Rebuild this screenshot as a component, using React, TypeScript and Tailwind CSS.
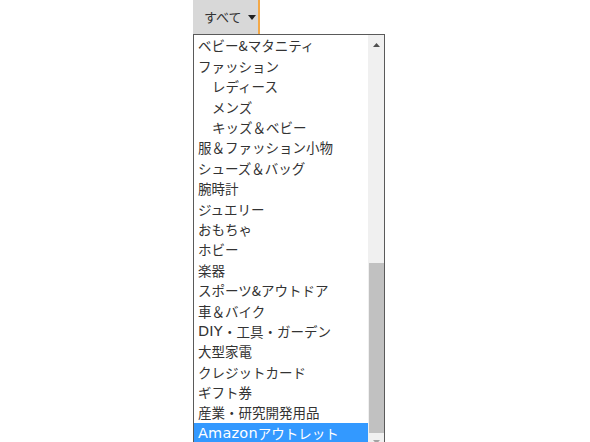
import React from "react";

const items: { label: string; latin?: string; indent?: boolean }[] = [
  { label: "ベビー&マタニティ" },
  { label: "ファッション" },
  { label: "レディース", indent: true },
  { label: "メンズ", indent: true },
  { label: "キッズ＆ベビー", indent: true },
  { label: "服＆ファッション小物" },
  { label: "シューズ＆バッグ" },
  { label: "腕時計" },
  { label: "ジュエリー" },
  { label: "おもちゃ" },
  { label: "ホビー" },
  { label: "楽器" },
  { label: "スポーツ&アウトドア" },
  { label: "車＆バイク" },
  { latin: "DIY", label: "・工具・ガーデン" },
  { label: "大型家電" },
  { label: "クレジットカード" },
  { label: "ギフト券" },
  { label: "産業・研究開発用品" },
  { latin: "Amazon", label: "アウトレット" },
];

export default function App() {
  return (
    <div
      className="w-[590px] h-[442px] bg-white overflow-hidden relative"
      style={{ fontFamily: '"Noto Sans CJK JP", "Noto Sans", sans-serif' }}
    >
      <div className="ml-[193px] flex flex-col">
        <div className="flex">
          <div className="w-[65px] h-[34px] bg-[#d8d8d8] flex items-center pl-[11px] text-[13px] text-[#333]">
            すべて
            <svg width="8" height="5" viewBox="0 0 8 5" className="ml-[6px] mt-[1px]">
              <path d="M0 0 L8 0 L4 5 Z" fill="#222" />
            </svg>
          </div>
          <div className="w-[2px] h-[34px] bg-[#f3a847]" />
        </div>
        <div className="w-[192px] h-[420px] border-t border-l border-r border-[#5a5a5a] flex bg-white">
          <div className="flex-1 flex flex-col pt-[1px]">
            {items.map((it, i) => {
              const sel = i === items.length - 1;
              return (
                <div
                  key={i}
                  className={`h-[20.4px] shrink-0 flex items-center text-[13.5px] leading-none whitespace-nowrap ${
                    it.indent ? "pl-[18px]" : "pl-[4px]"
                  } ${sel ? "bg-[#3399ff] text-white" : "text-[#333]"}`}
                >
                  {it.latin && (
                    <span className="text-[14.5px] tracking-[0.2px]" style={{ fontFamily: '"DejaVu Sans", sans-serif' }}>
                      {it.latin}
                    </span>
                  )}
                  {it.label}
                </div>
              );
            })}
          </div>
          <div className="w-[16px] bg-[#f0f0f0] flex flex-col items-center">
            <div className="h-[20px] w-full flex items-center justify-center">
              <svg width="7" height="4" viewBox="0 0 7 4">
                <path d="M0 4 L7 4 L3.5 0 Z" fill="#505050" />
              </svg>
            </div>
            <div className="h-[208px]" />
            <div className="w-[15px] h-[170px] bg-[#c1c1c1]" />
            <div className="h-[12px] w-full flex items-end justify-center pb-[1px]">
              <svg width="7" height="4" viewBox="0 0 7 4">
                <path d="M0 0 L7 0 L3.5 4 Z" fill="#a3a3a3" />
              </svg>
            </div>
          </div>
        </div>
      </div>
    </div>
  );
}
